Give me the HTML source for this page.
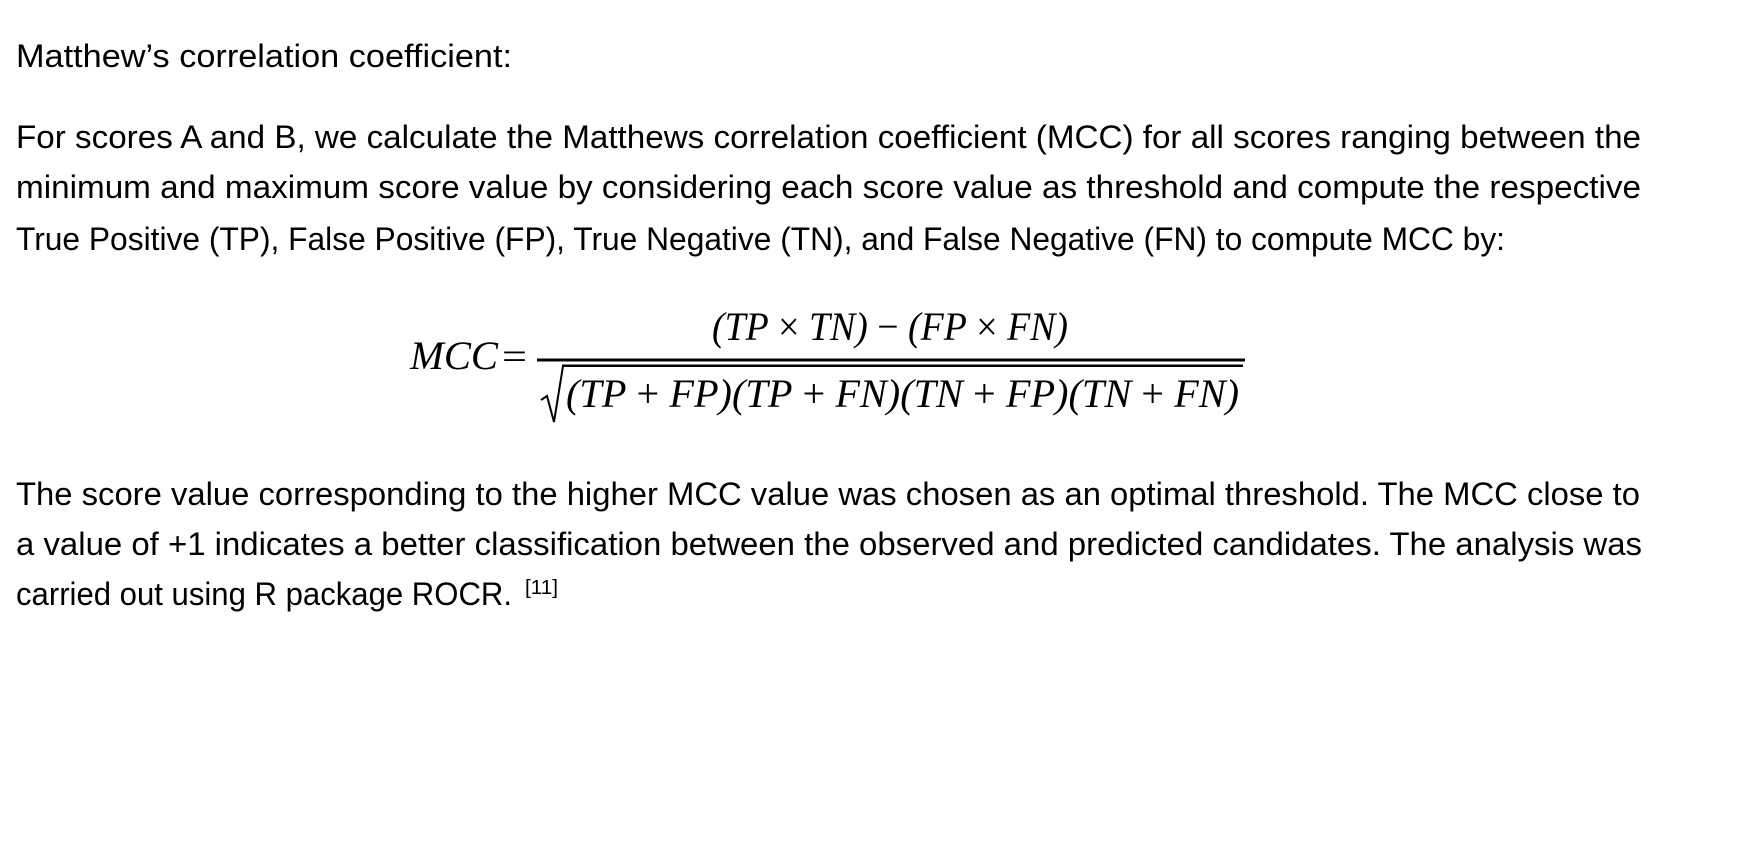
<!DOCTYPE html>
<html><head><meta charset="utf-8"><style>
html,body{margin:0;padding:0;background:#fff;width:1752px;height:864px;overflow:hidden}
svg{display:block}
.t{font-family:"Liberation Sans",sans-serif;font-size:32px;fill:#000}
.m{font-family:"Liberation Serif",serif;font-style:italic;font-size:40px;fill:#000}
</style></head><body>
<svg width="1752" height="864" viewBox="0 0 1752 864" xmlns="http://www.w3.org/2000/svg">
<text class="t" x="16" y="67" textLength="496" lengthAdjust="spacingAndGlyphs">Matthew’s correlation coefficient:</text>
<text class="t" x="16" y="148" textLength="1625" lengthAdjust="spacingAndGlyphs">For scores A and B, we calculate the Matthews correlation coefficient (MCC) for all scores ranging between the</text>
<text class="t" x="16" y="198" textLength="1625" lengthAdjust="spacingAndGlyphs">minimum and maximum score value by considering each score value as threshold and compute the respective</text>
<text class="t" x="16" y="250" textLength="1489" lengthAdjust="spacingAndGlyphs">True Positive (TP), False Positive (FP), True Negative (TN), and False Negative (FN) to compute MCC by:</text>

<text class="m" x="410" y="369" textLength="88" lengthAdjust="spacingAndGlyphs">MCC</text>
<text x="502" y="369" style="font-family:'Liberation Serif',serif;font-size:38px" textLength="25" lengthAdjust="spacingAndGlyphs">=</text>
<rect x="537" y="358.5" width="708" height="3" fill="#000"/>
<text class="m" x="712" y="340" textLength="356" lengthAdjust="spacingAndGlyphs">(TP<tspan font-style="normal"> × </tspan>TN)<tspan font-style="normal"> − </tspan>(FP<tspan font-style="normal"> × </tspan>FN)</text>
<rect x="562" y="364.5" width="681" height="2.5" fill="#000"/>
<path d="M541 400 L547 396 L554 422 L563 366" stroke="#000" stroke-width="2" fill="none"/>
<text class="m" x="566" y="407" textLength="673" lengthAdjust="spacingAndGlyphs">(TP<tspan font-style="normal"> + </tspan>FP)(TP<tspan font-style="normal"> + </tspan>FN)(TN<tspan font-style="normal"> + </tspan>FP)(TN<tspan font-style="normal"> + </tspan>FN)</text>

<text class="t" x="16" y="505" textLength="1624" lengthAdjust="spacingAndGlyphs">The score value corresponding to the higher MCC value was chosen as an optimal threshold. The MCC close to</text>
<text class="t" x="16" y="555" textLength="1626" lengthAdjust="spacingAndGlyphs">a value of +1 indicates a better classification between the observed and predicted candidates. The analysis was</text>
<text class="t" x="16" y="605" textLength="496" lengthAdjust="spacingAndGlyphs">carried out using R package ROCR.</text>
<text x="525" y="594" style="font-family:'Liberation Sans',sans-serif;font-size:20px" textLength="33" lengthAdjust="spacingAndGlyphs">[11]</text>
</svg>
</body></html>
